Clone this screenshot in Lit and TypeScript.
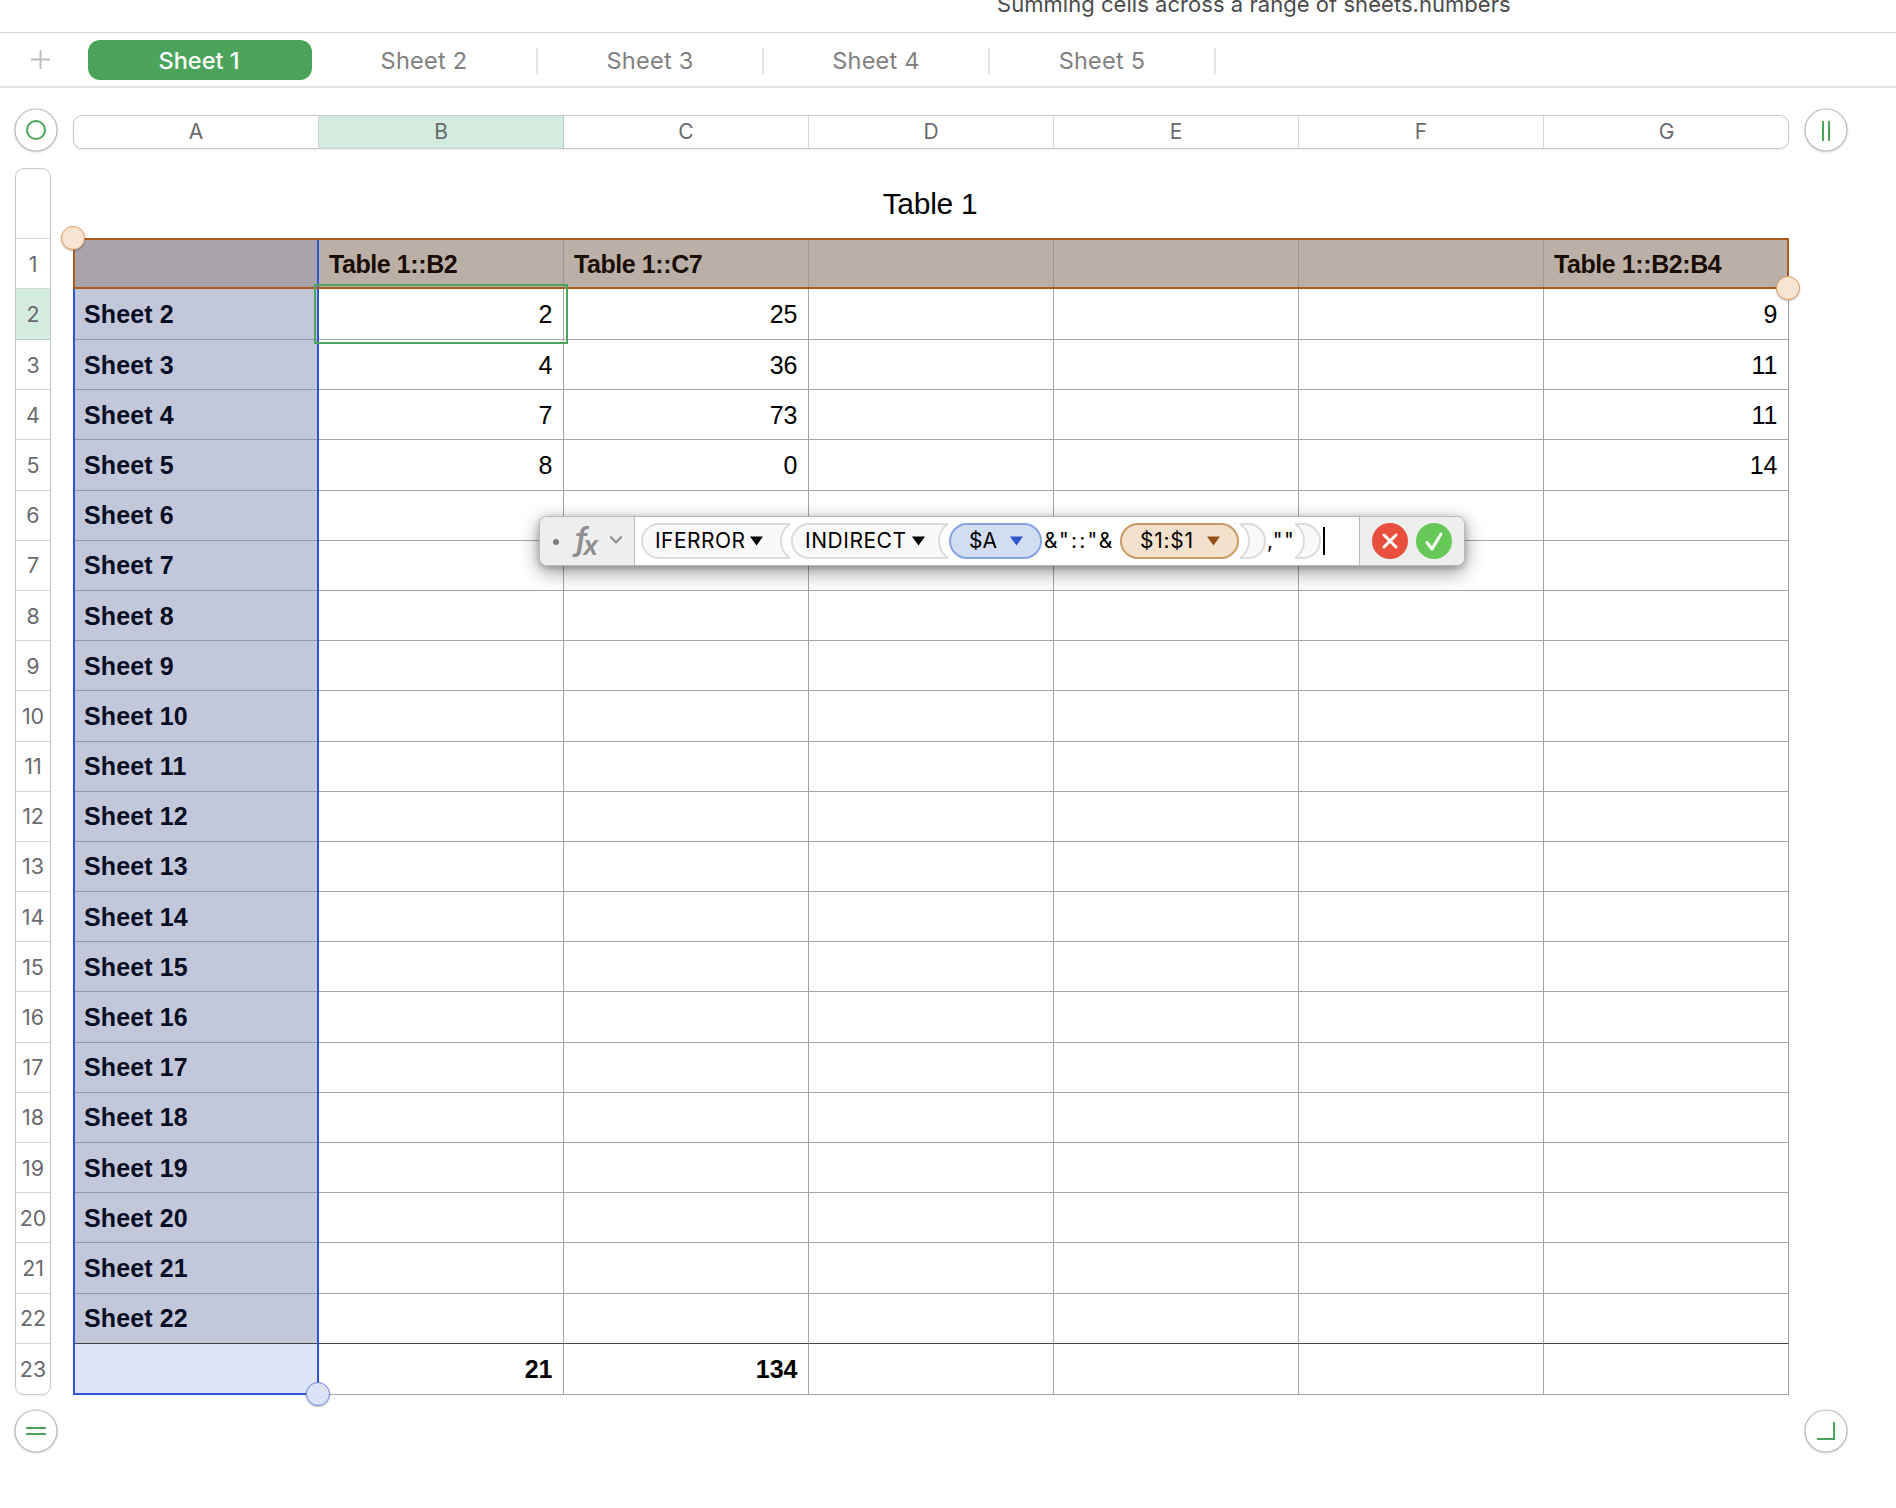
import { LitElement, html, svg, css } from "lit";
import { customElement, property } from "lit/decorators.js";

const COLUMNS = ["A", "B", "C", "D", "E", "F", "G"];
const TABS = ["Sheet 1", "Sheet 2", "Sheet 3", "Sheet 4", "Sheet 5"];

const VALUES: Record<string, string> = {
  B1: "Table 1::B2", C1: "Table 1::C7", G1: "Table 1::B2:B4",
  B2: "2", C2: "25", G2: "9",
  B3: "4", C3: "36", G3: "11",
  B4: "7", C4: "73", G4: "11",
  B5: "8", C5: "0", G5: "14",
  B23: "21", C23: "134",
};
for (let r = 2; r <= 22; r++) VALUES["A" + r] = "Sheet " + r;

const ROWS = Array.from({ length: 23 }, (_, i) => i + 1);

@customElement("sheet-tabs")
class SheetTabs extends LitElement {
  static styles = css`
    :host { display: flex; align-items: center; height: 53px; border-bottom: 2px solid #e4e4e4; padding-left: 31px; }
    .plus { width: 19px; height: 19px; margin-right: 38px; margin-top: -1px; display: block; }
    .tab { box-sizing: border-box; width: 226px; height: 26px; text-align: center; color: #808080;
      font: 400 23.5px/26px Inter, sans-serif; letter-spacing: 0.25px; border-right: 2px solid #e2e2e2; margin-top: 2px; }
    .active { width: 224px; height: 40px; line-height: 41px; border: 0; border-radius: 12px; background: #4ca45a; color: #fff; font-weight: 500; margin-top: 1px;
      padding-right: 2px; letter-spacing: 0; }
  `;
  render() {
    return html`
      <svg class="plus" viewBox="0 0 19 19"><path d="M9.5 0V19M0 9.5H19" stroke="#bdbdbd" stroke-width="2" /></svg>
      ${TABS.map((t, i) => html`<div class="tab ${i === 0 ? "active" : ""}">${t}</div>`)}
    `;
  }
}

@customElement("round-handle")
class RoundHandle extends LitElement {
  @property() kind = "ring";
  static styles = css`
    :host { display: block; width: 44px; height: 44px; }
    .icon { display: block; overflow: visible; filter: drop-shadow(0 1px 1px rgba(0, 0, 0, 0.14)); }
  `;
  render() {
    const shapes: Record<string, unknown> = {
      ring: svg`<circle cx="22" cy="22" r="9" />`,
      cols: svg`<path d="M19 13V33M25 13V33" />`,
      rows: svg`<path d="M12 19H32M12 25H32" />`,
      corner: svg`<path d="M13 30H30V13" />`,
    };
    return html`<svg class="icon" width="44" height="44" viewBox="0 0 44 44" fill="none">
      <circle cx="22" cy="22" r="21" fill="#fff" stroke="#b9b9b9" stroke-width="1.2" />
      <g stroke="#4ca45a" stroke-width="2">${shapes[this.kind]}</g>
    </svg>`;
  }
}

@customElement("formula-editor")
class FormulaEditor extends LitElement {
  static styles = css`
    :host { display: flex; box-sizing: border-box; width: 926px; height: 50px; border: 1px solid #b9b9b9; border-radius: 8px;
      background: #fff; box-shadow: 0 6px 20px rgba(0, 0, 0, 0.4), 0 2px 7px rgba(0, 0, 0, 0.22);
      font: 400 21px/48px Inter, sans-serif; color: #000; }
    .side { background: #eeeeee; display: flex; align-items: center; box-sizing: border-box; }
    .left { width: 95px; border-right: 1px solid #b9b9b9; border-radius: 7px 0 0 7px; }
    .right { width: 105px; border-left: 1px solid #b9b9b9; border-radius: 0 7px 7px 0; gap: 8px; padding: 0 0 1px 12px; }
    .body { flex: 1; display: flex; align-items: center; padding-left: 6px; height: 48px; }
    .tok { display: grid; height: 36px; flex: none; }
    .tok > * { grid-area: 1 / 1; }
    .shape { display: block; overflow: visible; }
    .label { display: flex; align-items: center; line-height: 36px; white-space: pre; }
    .plain { box-sizing: border-box; white-space: pre; flex: none; line-height: 36px; }
    .join { width: 78px; padding-left: 2px; letter-spacing: 2.2px; }
    .tail { width: 28px; padding-left: 1px; letter-spacing: 1.4px; }
    .dot { width: 6px; height: 6px; border-radius: 3px; background: #7c7c7c; margin: 2px 0 0 13px; }
    .fx { display: flex; width: 28px; margin-left: 16px; color: #8e8e93; font-style: italic; font-weight: 600; height: 48px; }
    .f { font-size: 31px; line-height: 44px; width: 8px; }
    .x { font-size: 27px; line-height: 58px; }
    .chev { margin-left: 7px; margin-top: -3px; }
    .caret { width: 2px; height: 28px; background: #000; margin-left: 2px; }
  `;
  private open(width: number, name: string, pad: number, gap: number, spacing: number) {
    const w = width - 1;
    const d = `M${w} 1H18A17 17 0 0 0 18 35H${w}A20.5 20.5 0 0 1 ${w} 1Z`;
    return html`<div class="tok" style="width:${width}px">
      <svg class="shape" width=${width} height="36"><path d=${d} fill="#f9f9f9" stroke="#dcdcdc" stroke-width="2" stroke-linejoin="bevel" /></svg>
      <span class="label" style="padding-left:${pad}px;letter-spacing:${spacing}px">${name}${this.tri("#000", gap)}</span>
    </div>`;
  }
  private tri(color: string, gap: number) {
    return html`<svg width="13" height="10" style="margin-left:${gap}px"><path d="M0 0.5H13L6.5 9.5Z" fill=${color} /></svg>`;
  }
  private ref(width: number, name: string, pad: number, gap: number, spacing: number, fill: string, line: string, arrow: string) {
    return html`<div class="tok" style="width:${width}px">
      <svg class="shape" width=${width} height="36"><rect x="1" y="1" width=${width - 2} height="34" rx="17" fill=${fill} stroke=${line} stroke-width="2" /></svg>
      <span class="label" style="padding-left:${pad}px;letter-spacing:${spacing}px">${name}${this.tri(arrow, gap)}</span>
    </div>`;
  }
  private close() {
    return html`<svg class="shape" width="27" height="36"><path d="M1 1H9A17 17 0 0 1 9 35H1A20.5 20.5 0 0 0 1 1Z" fill="#f9f9f9" stroke="#dcdcdc" stroke-width="2" stroke-linejoin="bevel" /></svg>`;
  }
  render() {
    return html`
      <div class="side left">
        <span class="dot"></span>
        <span class="fx"><span class="f">f</span><span class="x">x</span></span>
        <svg class="chev" width="12" height="8"><path d="M1 1.2L6 6.4L11 1.2" fill="none" stroke="#8e8e93" stroke-width="2.2" stroke-linecap="round" stroke-linejoin="round" /></svg>
      </div>
      <div class="body">
        ${this.open(150, "IFERROR", 14, 4.5, 0.45)}
        ${this.open(158, "INDIRECT", 14, 5, 0.53)}
        ${this.ref(93, "$A", 20, 13.5, 0, "#d2dcf3", "#86a3e2", "#2b57cd")}
        <span class="plain join">&amp;"::"&amp;</span>
        ${this.ref(119, "$1:$1", 20, 13, 0.75, "#f4e1cc", "#cb9a64", "#96501c")}
        ${this.close()}
        <span class="plain tail">,""</span>
        ${this.close()}
        <span class="caret"></span>
      </div>
      <div class="side right">
        <svg width="36" height="36"><circle cx="18" cy="18" r="18" fill="#ea4e3d" /><path d="M12 12L24 24M24 12L12 24" stroke="#fff" stroke-width="3" stroke-linecap="round" /></svg>
        <svg width="36" height="36"><circle cx="18" cy="18" r="18" fill="#66c857" /><path d="M11 19.5L16 26L25 11" fill="none" stroke="#fff" stroke-width="3" stroke-linecap="round" stroke-linejoin="round" /></svg>
      </div>
    `;
  }
}

@customElement("app-root")
class AppRoot extends LitElement {
  static styles = css`
    :host { display: block; width: 1896px; height: 1508px; overflow: hidden; background: #fff; position: relative; }
    .titlebar { height: 32px; border-bottom: 1px solid #d6d6d6; overflow: hidden; padding-left: 997px; box-sizing: content-box; }
    .doc { display: block; margin-top: -11px; font: 400 22px/30px Inter, sans-serif; letter-spacing: 0.04px; color: #4b4b4b; white-space: nowrap; }
    .canvas { display: grid; grid-template-columns: 74px 1715px 107px; grid-template-rows: 80px 1227px 113px; }
    .h-tl { margin: 20px 0 0 14px; }
    .h-tr { margin: 20px 0 0 15px; }
    .h-bl { margin: 14px 0 0 14px; }
    .h-br { margin: 14px 0 0 15px; grid-column: 3; }
    .colhead { box-sizing: border-box; display: flex; height: 34px; margin: 27px 0 0 -1px; width: 1716px; border: 1px solid #c9c9c9; border-radius: 9px;
      box-shadow: 0 1px 2px rgba(0, 0, 0, 0.08); overflow: hidden; }
    .col { box-sizing: border-box; width: 245px; border-right: 1px solid #d3d3d3; text-align: center; font: 400 21px/32px Inter, sans-serif; color: #6a6a6e; flex: none; }
    .col:last-child { border-right: 0; }
    .rowhead { box-sizing: border-box; width: 36px; margin-left: 15px; height: 1227px; border: 1px solid #c9c9c9; border-radius: 9px;
      display: grid; grid-template-rows: 70px 50px 51px repeat(20, 50.2px) 50px; box-shadow: 0 1px 2px rgba(0, 0, 0, 0.08); overflow: hidden; }
    .num { box-sizing: border-box; border-bottom: 1px solid #d3d3d3; display: flex; align-items: center; justify-content: center; font: 400 21.4px/24px Inter, sans-serif; color: #6a6a6e; }
    .num:last-child { border-bottom: 0; }
    .on { background: #d4ecdf; border-color: #b3c9bd; }
    .area { display: grid; grid-template-rows: 71px 1156px; }
    .name { text-align: center; padding-right: 3px; font: 400 30px/71px "Liberation Sans", sans-serif; letter-spacing: -0.3px; color: #000; }
    .table { display: grid; grid-template-columns: repeat(7, 245px); grid-template-rows: 50px 51px repeat(20, 50.2px) 51px; }
    .cell { box-sizing: border-box; border-right: 1px solid #a6a6a6; border-bottom: 1px solid #a6a6a6; padding: 0 10.5px 0 10px; display: flex; align-items: center; justify-content: flex-end;
      font: 400 25px/30px "Liberation Sans", sans-serif; color: #000; white-space: nowrap; min-width: 0; }
    .first { background: #c2c7da; border-bottom-color: #9297ad; font-weight: 700; justify-content: flex-start; color: #070d22; letter-spacing: 0.12px; }
    .head { background: #bab0a8; border-right-color: #a1978f; font-weight: 700; justify-content: flex-start; color: #1a0e04; letter-spacing: -0.42px; }
    .corner { background: #a8a3ab; }
    .last { border-bottom-color: #444; }
    .foot { font-weight: 700; }
    .footA { background: #dfe5f8; }
    .over { position: absolute; box-sizing: border-box; }
    .selA { left: 73px; top: 238px; width: 246px; height: 1157px; border: 2px solid #2b57d4; }
    .selR { left: 73px; top: 238px; width: 1716px; height: 51px; border: 2px solid #aa5b21; }
    .cellsel { left: 314px; top: 284px; width: 254px; height: 60px; border: 2px solid #4ca45a; }
    .knob { width: 24px; height: 24px; border-radius: 12px; background: #f7e4d2; border: 1.5px solid #eb9c5c; box-shadow: 0 1px 2px rgba(0, 0, 0, 0.25); }
    .k1 { left: 61px; top: 226px; }
    .k2 { left: 1776px; top: 276px; }
    .k3 { left: 306px; top: 1382px; background: #d9e2f6; border-color: #7387ee; }
    .formula { left: 539px; top: 516px; }
  `;
  private cell(c: string, r: number) {
    const k = ["cell"];
    if (r === 1) k.push("head");
    else if (c === "A") k.push("first");
    if (r === 1 && c === "A") k.push("corner");
    if (r === 22) k.push("last");
    if (r === 23) k.push("foot");
    if (r === 23 && c === "A") k.push("footA");
    return html`<div class=${k.join(" ")}>${VALUES[c + r] ?? ""}</div>`;
  }
  render() {
    return html`
      <div class="titlebar"><span class="doc">Summing cells across a range of sheets.numbers</span></div>
      <sheet-tabs></sheet-tabs>
      <div class="canvas">
        <round-handle class="h-tl" kind="ring"></round-handle>
        <div class="colhead">${COLUMNS.map((c) => html`<div class="col ${c === "B" ? "on" : ""}">${c}</div>`)}</div>
        <round-handle class="h-tr" kind="cols"></round-handle>
        <div class="rowhead">
          <div class="num"></div>
          ${ROWS.map((r) => html`<div class="num ${r === 2 ? "on" : ""}">${r}</div>`)}
        </div>
        <div class="area">
          <div class="name">Table 1</div>
          <div class="table">${ROWS.map((r) => COLUMNS.map((c) => this.cell(c, r)))}</div>
        </div>
        <div></div>
        <round-handle class="h-bl" kind="rows"></round-handle>
        <round-handle class="h-br" kind="corner"></round-handle>
      </div>
      <div class="over selA"></div>
      <div class="over selR"></div>
      <div class="over cellsel"></div>
      <div class="over knob k1"></div>
      <div class="over knob k2"></div>
      <div class="over knob k3"></div>
      <formula-editor class="over formula"></formula-editor>
    `;
  }
}
